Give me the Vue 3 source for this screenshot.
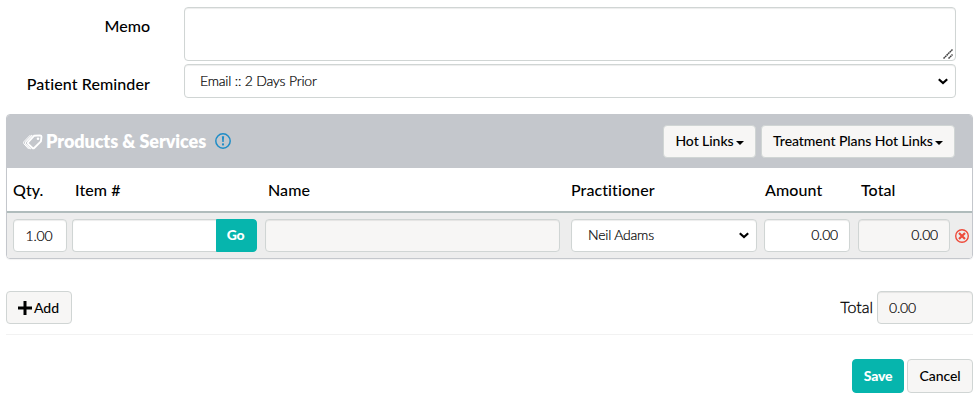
<template>
  <form class="billing-form" @submit.prevent>
    <div class="form-row memo-row">
      <label for="memo">Memo</label>
      <textarea id="memo" v-model="memo" class="form-control"></textarea>
    </div>
    <div class="form-row reminder-row">
      <label for="reminder">Patient Reminder</label>
      <select id="reminder" v-model="reminder" class="form-control">
        <option>Email :: 2 Days Prior</option>
      </select>
    </div>

    <section class="panel">
      <header class="panel-heading">
        <svg class="tags-icon" viewBox="0 0 20 16" fill="none" stroke="#fff">
          <path d="M11.2 1.7 L17 1.4 Q18.5 1.4 18.5 2.8 L17.9 7.3 L11.2 14 Q10.3 14.7 9.5 14 L5.2 9.9 Q4.5 9.1 5.2 8.2 Z" stroke-width="1.9" />
          <path d="M9.2 1.2 L2.8 7.9 Q2 9.1 2.8 10.1 L7.6 15" stroke-width="1.2" />
          <path d="M7.2 1.2 L1 7.6 Q0.2 8.8 1 9.9 L5.7 15" stroke-width="1" />
          <circle cx="15" cy="4.8" r="1.3" fill="#fff" stroke="none" />
        </svg>
        <h3>Products &amp; Services</h3>
        <svg class="info-icon" viewBox="0 0 16 16">
          <circle cx="8" cy="8" r="7.2" fill="none" stroke="#1f8dc7" stroke-width="1.5" />
          <path d="M6.9 3.2h2.2l-.4 5.8H7.3z" fill="#1f8dc7" />
          <rect x="7" y="10.4" width="2" height="2" fill="#1f8dc7" />
        </svg>
        <div class="heading-actions">
          <button type="button" class="btn hot-links">Hot Links<i class="caret"></i></button>
          <button type="button" class="btn plan-links">Treatment Plans Hot Links<i class="caret"></i></button>
        </div>
      </header>

      <div class="grid-row column-names">
        <span v-for="column in columns" :key="column">{{ column }}</span>
      </div>

      <div v-for="(line, index) in lines" :key="index" class="grid-row line">
        <input v-model="line.qty" class="form-control qty" />
        <div class="input-group">
          <input v-model="line.item" class="form-control" />
          <button type="button" class="btn btn-primary">Go</button>
        </div>
        <input :value="line.name" class="form-control name" readonly />
        <select v-model="line.practitioner" class="form-control practitioner">
          <option>Neil Adams</option>
        </select>
        <input v-model="line.amount" class="form-control amount" />
        <input :value="line.total" class="form-control amount line-total" readonly />
        <svg class="remove-icon" viewBox="0 0 14 14" fill="none" stroke="#ee4b3b">
          <circle cx="7" cy="7" r="6.3" stroke-width="1.4" />
          <path d="M4 4 L10 10 M10 4 L4 10" stroke-width="2.2" />
        </svg>
      </div>
    </section>

    <div class="summary">
      <button type="button" class="btn add">
        <svg viewBox="0 0 14 14"><path d="M5.5 0h3v5.500H14v3H8.500V14h-3V8.500H0v-3h5.500z" /></svg>Add
      </button>
      <label for="total">Total</label>
      <input id="total" value="0.00" class="form-control total" readonly />
    </div>

    <footer class="actions">
      <button type="submit" class="btn btn-primary save">Save</button>
      <button type="button" class="btn cancel">Cancel</button>
    </footer>
  </form>
</template>

<script setup>
import { ref } from 'vue'

const memo = ref('')
const reminder = ref('Email :: 2 Days Prior')
const columns = ['Qty.', 'Item #', 'Name', 'Practitioner', 'Amount', 'Total']
const lines = ref([
  { qty: '1.00', item: '', name: '', practitioner: 'Neil Adams', amount: '0.00', total: '0.00' }
])
</script>

<style>
body {
  background: #fff;
}
</style>

<style scoped>
* {
  box-sizing: border-box;
}

.billing-form {
  height: 404px;
  padding: 7px 5px 0 6px;
  font-family: Lato, sans-serif;
  font-size: 16px;
  color: #000;
  overflow: hidden;
}

.form-row {
  display: grid;
  grid-template-columns: 144px 772px;
  column-gap: 34px;
}

.form-row label {
  font-weight: 500;
  line-height: 20px;
  text-align: right;
}

.memo-row {
  margin-bottom: 3px;
}

.memo-row label {
  padding-top: 9px;
}

.reminder-row label {
  padding-top: 10px;
  letter-spacing: 0.1px;
}

.form-control {
  width: 100%;
  min-width: 0;
  height: 33px;
  margin: 0;
  padding: 5px 11px 7px;
  border: 1px solid #d0d5d4;
  border-radius: 4px;
  background-color: #fff;
  box-shadow: inset 0 1px 1px rgba(0, 0, 0, 0.075);
  color: #000;
  font-family: inherit;
  font-size: 14px;
  font-weight: 300;
  letter-spacing: -0.2px;
  line-height: 20px;
  -webkit-text-stroke: 0.2px #000;
  outline: none;
}

.form-control[readonly] {
  background-color: #f7f6f5;
}

textarea.form-control {
  display: block;
  height: 54px;
  resize: both;
}

textarea.form-control::-webkit-resizer {
  background: url("data:image/svg+xml,%3Csvg xmlns='http://www.w3.org/2000/svg' width='10' height='10'%3E%3Cpath d='M.5 9.5l9-9M5.5 9.5l4-4' stroke='%23444' stroke-width='1.5' stroke-dasharray='1.8 .4'/%3E%3C/svg%3E") no-repeat right 2px bottom 1px;
}

select.form-control {
  padding: 5px 15px 7px 16px;
  appearance: none;
  background-image: url("data:image/svg+xml,%3Csvg xmlns='http://www.w3.org/2000/svg' width='10' height='7'%3E%3Cpath d='M.8 1.2L5 5l4.200-3.800' fill='none' stroke='%23000' stroke-width='2.2'/%3E%3C/svg%3E");
  background-repeat: no-repeat;
  background-position: right 7px center;
}

.reminder-row select.form-control {
  height: 34px;
  padding: 6px 15px;
}

.btn {
  display: inline-flex;
  align-items: center;
  justify-content: center;
  height: 33px;
  padding: 0;
  border: 1px solid #d0d5d4;
  border-radius: 4px;
  background: #f7f6f5;
  color: #000;
  font-family: inherit;
  font-size: 14px;
  font-weight: 500;
  letter-spacing: -0.06px;
  line-height: 20px;
  white-space: nowrap;
}

.heading-actions .btn {
  padding-bottom: 2px;
}

.btn-primary {
  border-color: #06b5ad;
  background: #06b5ad;
  color: #fff;
  font-weight: 900;
  letter-spacing: -0.2px;
}

.panel {
  width: 967px;
  margin-top: 16px;
  border: 1px solid #c4c7cc;
  border-radius: 4px;
  box-shadow: 0 1px 1px rgba(0, 0, 0, 0.05);
  overflow: hidden;
}

.panel-heading {
  display: flex;
  align-items: center;
  height: 53px;
  padding: 0 17px 0 16px;
  background: #c4c7cc;
}

.panel-heading h3 {
  margin: 0 0 2px 3px;
  color: #fff;
  font-size: 18px;
  font-weight: 800;
  letter-spacing: -0.08px;
}

.tags-icon {
  width: 20px;
  height: 16px;
}

.info-icon {
  width: 16px;
  height: 16px;
  margin: 0 0 1px 9px;
}

.heading-actions {
  display: flex;
  gap: 5px;
  margin-left: auto;
}

.hot-links {
  width: 93px;
}

.plan-links {
  width: 194px;
}

.caret {
  margin: 4px 0 0 2px;
  border-top: 4px solid #000;
  border-right: 4px solid transparent;
  border-left: 4px solid transparent;
}

.grid-row {
  display: grid;
  padding-left: 6px;
}

.column-names {
  grid-template-columns: 62px 193px 303px 194px 96px 92px;
  height: 45px;
  border-bottom: 2px solid #b0bcbc;
  font-weight: 500;
  line-height: 43px;
  letter-spacing: 0.08px;
}

.line {
  grid-template-columns: 59px 193px 306px 193px 94px 97px 14px;
  align-items: center;
  height: 45px;
  background: #ededed;
}

.input-group {
  display: flex;
  width: 185px;
}

.input-group .form-control {
  width: 144px;
  border-right: 0;
  border-radius: 4px 0 0 4px;
}

.input-group .btn {
  width: 41px;
  padding: 0 2px 1px 0;
  border-radius: 0 4px 4px 0;
}

.qty {
  width: 54px;
  padding: 6px 12px 6px 10px;
  text-align: center;
}

.name {
  width: 295px;
}

.practitioner {
  width: 186px;
}

.amount {
  width: 86px;
  text-align: right;
}

.line-total {
  width: 92px;
}

.remove-icon {
  width: 14px;
  height: 14px;
}

.summary {
  display: flex;
  align-items: center;
  height: 76px;
  padding: 22px 0 0;
  border-bottom: 1px solid #f2f2f2;
}

.summary label {
  margin: 0 0 2px auto;
  font-weight: 300;
  -webkit-text-stroke: 0.3px #000;
}

.summary .total {
  width: 96px;
  margin-left: 4px;
  padding: 6px 11px;
}

.add {
  width: 66px;
  padding-right: 1px;
}

.add svg {
  width: 14px;
  height: 14px;
  margin-right: 2px;
}

.actions {
  display: flex;
  justify-content: flex-end;
  gap: 3px;
  padding-top: 24px;
}

.save {
  width: 52px;
  height: 34px;
}

.cancel {
  width: 66px;
  height: 34px;
}
</style>
